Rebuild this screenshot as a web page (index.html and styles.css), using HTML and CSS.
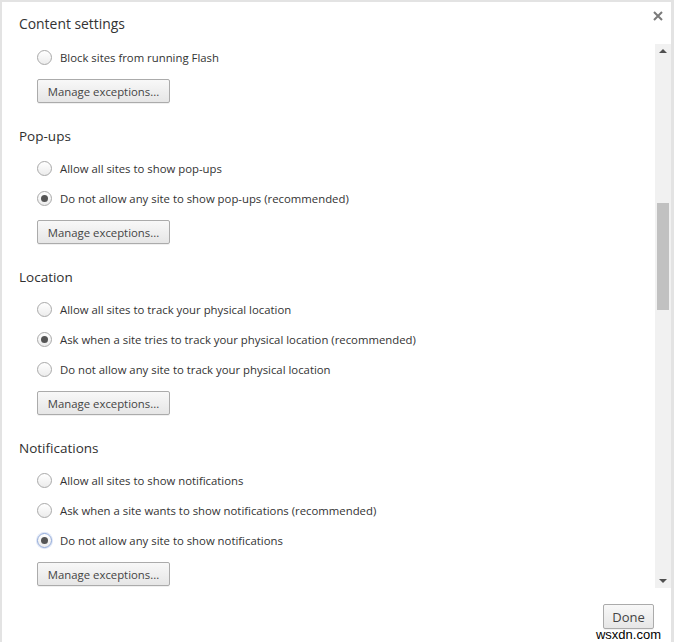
FILE: index.html
```html
<!DOCTYPE html>
<html lang="en">
<head>
    <meta charset="UTF-8">
    <title>Content settings</title>
    <link rel="stylesheet" href="styles.css">
</head>
<body>
    <div class="settings-dialog">
        <div class="dialog-header">
            <h1>Content settings</h1>
            <button class="close-btn" aria-label="Close">
                <svg width="10" height="10" viewBox="0 0 10 10">
                    <path d="M1 1 L9 9 M9 1 L1 9" stroke="#7a7a7a" stroke-width="2"/>
                </svg>
            </button>
        </div>

        <div class="dialog-body">
            <div class="content-list">
                <label class="radio-row"><span class="radio"></span>Block sites from running Flash</label>
                <button class="manage-btn">Manage exceptions...</button>

                <h3>Pop-ups</h3>
                <label class="radio-row"><span class="radio"></span>Allow all sites to show pop-ups</label>
                <label class="radio-row"><span class="radio checked"></span>Do not allow any site to show pop-ups (recommended)</label>
                <button class="manage-btn">Manage exceptions...</button>

                <h3>Location</h3>
                <label class="radio-row"><span class="radio"></span>Allow all sites to track your physical location</label>
                <label class="radio-row"><span class="radio checked"></span>Ask when a site tries to track your physical location (recommended)</label>
                <label class="radio-row"><span class="radio"></span>Do not allow any site to track your physical location</label>
                <button class="manage-btn">Manage exceptions...</button>

                <h3>Notifications</h3>
                <label class="radio-row"><span class="radio"></span>Allow all sites to show notifications</label>
                <label class="radio-row"><span class="radio"></span>Ask when a site wants to show notifications (recommended)</label>
                <label class="radio-row"><span class="radio checked focused"></span>Do not allow any site to show notifications</label>
                <button class="manage-btn">Manage exceptions...</button>
            </div>

            <div class="scrollbar">
                <span class="arrow up"></span>
                <div class="scroll-track">
                    <div class="scroll-thumb"></div>
                </div>
                <span class="arrow down"></span>
            </div>
        </div>

        <div class="dialog-footer">
            <button class="done-btn">Done</button>
            <span class="watermark">wsxdn.com</span>
        </div>
    </div>
</body>
</html>
```

FILE: styles.css
```css
:root {
    --text-color: #333333;
    --heading-color: #303030;
    --border-color: #ababab;
    --outer-bg: #e3e3e3;
    --track-bg: #f1f1f1;
    --thumb-bg: #c1c1c1;
}
* {
    margin: 0;
    padding: 0;
    box-sizing: border-box;
}
body {
    font-family: 'Open Sans', 'Noto Sans', sans-serif;
    background: var(--outer-bg);
    color: var(--text-color);
    width: 674px;
    height: 642px;
    overflow: hidden;
}
.settings-dialog {
    margin: 2px 3px 0 2px;
    height: 640px;
    background: #ffffff;
    display: flex;
    flex-direction: column;
    position: relative;
}

.dialog-header {
    height: 40px;
    display: flex;
    justify-content: space-between;
    align-items: flex-start;
    padding: 0 8px 0 17px;
}
.dialog-header h1 {
    font-size: 13.9px;
    font-weight: 400;
    line-height: 20px;
    margin-top: 12px;
    color: var(--text-color);
}
.close-btn {
    border: none;
    background: none;
    margin-top: 9px;
    width: 10px;
    height: 10px;
    display: flex;
}

.dialog-body {
    height: 546px;
    display: flex;
}
.content-list {
    flex: 1;
    padding-left: 35px;
    display: flex;
    flex-direction: column;
    align-items: flex-start;
    overflow: hidden;
}
.content-list h3 {
    font-size: 13.5px;
    font-weight: 400;
    line-height: 20px;
    margin: 23px 0 7px -18px;
    color: var(--heading-color);
}
.radio-row {
    height: 30px;
    display: flex;
    align-items: center;
    font-size: 11.35px;
    color: var(--text-color);
}
.radio {
    width: 15px;
    height: 15px;
    border-radius: 50%;
    border: 1px solid #a9a9a9;
    background: linear-gradient(#ffffff, #ececec);
    margin-right: 8px;
    position: relative;
}
.radio.checked::after {
    content: '';
    position: absolute;
    top: 3px;
    left: 3px;
    width: 7px;
    height: 7px;
    border-radius: 50%;
    background: #555555;
}
.radio.focused {
    border-color: #8fa8d8;
    box-shadow: 0 0 0 1px rgba(120, 150, 220, 0.25);
}

.manage-btn,
.done-btn {
    font-family: inherit;
    font-size: 11.35px;
    color: #444444;
    border: 1px solid var(--border-color);
    border-radius: 2px;
    background: linear-gradient(#f8f8f8, #e6e6e6);
    box-shadow: 0 1px 0 rgba(0, 0, 0, 0.06);
}
.manage-btn {
    width: 133px;
    height: 24px;
    margin-top: 7px;
}

.scrollbar {
    width: 16px;
    margin-top: 2px;
    background: var(--track-bg);
    display: flex;
    flex-direction: column;
    align-items: center;
}
.arrow {
    width: 0;
    height: 0;
    border-left: 4px solid transparent;
    border-right: 4px solid transparent;
    margin: 5px 0;
}
.arrow.up {
    border-bottom: 4px solid #505050;
}
.arrow.down {
    border-top: 4px solid #505050;
}
.scroll-track {
    flex: 1;
    width: 100%;
    padding: 145px 2px 0;
}
.scroll-thumb {
    height: 107px;
    background: var(--thumb-bg);
}

.dialog-footer {
    flex: 1;
    display: flex;
    justify-content: flex-end;
    align-items: flex-start;
    padding: 16px 17px 0 0;
}
.done-btn {
    width: 51px;
    height: 25px;
    font-size: 13px;
}
.watermark {
    position: absolute;
    right: 10px;
    bottom: 1px;
    font-family: 'Liberation Sans', Arial, sans-serif;
    font-size: 13px;
    color: #000000;
    line-height: 13px;
}
```
